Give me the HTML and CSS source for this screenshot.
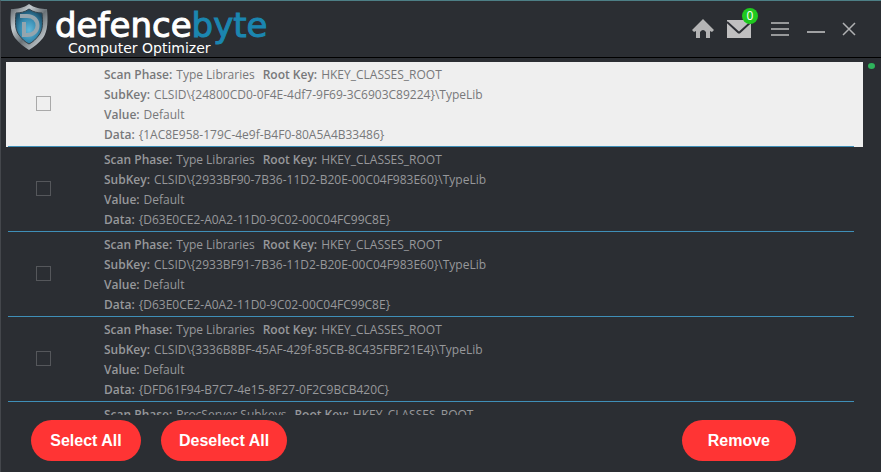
FILE: index.html
```html
<!DOCTYPE html>
<html lang="en">
<head>
<meta charset="UTF-8">
<meta name="viewport" content="width=device-width, initial-scale=1.0">
<title>defencebyte Computer Optimizer</title>
<link rel="stylesheet" href="styles.css">
</head>

<body>

<header class="titlebar">
  <div class="brand">
    <svg class="shield" viewBox="0 0 38 46" aria-hidden="true">
      <defs>
        <linearGradient id="steel" x1="0" y1="0" x2="1" y2="1">
          <stop offset="0" stop-color="#4d5459"/>
          <stop offset=".3" stop-color="#c3cace"/>
          <stop offset=".55" stop-color="#697176"/>
          <stop offset=".8" stop-color="#b5bcc0"/>
          <stop offset="1" stop-color="#3c4348"/>
        </linearGradient>
        <radialGradient id="glass" cx=".5" cy=".6" r=".6">
          <stop offset="0" stop-color="#5fb9dc"/>
          <stop offset=".6" stop-color="#3385aa"/>
          <stop offset="1" stop-color="#1c4c66"/>
        </radialGradient>
      </defs>
      <path d="M19 0C14 4 7 5 1 5C0 16 0 27 5 34C9 39 14 43 19 46C24 43 29 39 33 34C38 27 38 16 37 5C31 5 24 4 19 0Z" fill="url(#steel)"/>
      <path d="M19 5C15 8 10 9 6 9C5 18 5 26 9 31C12 35 15 38 19 40C23 38 26 35 29 31C33 26 33 18 32 9C28 9 23 8 19 5Z" fill="url(#glass)" stroke="#34434c"/>
      <path d="M10 12H17C31 12 31 31 17 31H14V18" fill="none" stroke="#94a5ae" stroke-width="4"/>
    </svg>
    <div class="wordmark">
      <div class="name">defence<span>byte</span></div>
      <div class="product">Computer Optimizer</div>
    </div>
  </div>

  <nav class="tools">
    <button class="tool home" aria-label="Home">
      <svg width="22" height="20" viewBox="0 0 22 20"><path d="M11 0L22 11L20 13L18 12V19H14V13Q11 9 8 13V19H4V12L2 13L0 11Z" fill="#b4b4b5"/></svg>
    </button>
    <button class="tool mail" aria-label="Messages">
      <svg width="24" height="18" viewBox="0 0 24 18"><rect width="24" height="18" fill="#c0bfc0"/><path d="M0 2L11 12Q12 13 13 12L24 2" fill="none" stroke="#2c2e34" stroke-width="2"/></svg>
      <span class="badge">0</span>
    </button>
    <button class="tool menu" aria-label="Menu">
      <svg width="20" height="16" viewBox="0 0 20 16"><path d="M1 2H19M1 8H19M1 14H19" stroke="#97989a" stroke-width="2"/></svg>
    </button>
    <button class="tool minimize" aria-label="Minimize">
      <svg width="18" height="16" viewBox="0 0 18 16"><path d="M0 11H18" stroke="#a0a1a3" stroke-width="2"/></svg>
    </button>
    <button class="tool close" aria-label="Close">
      <svg width="14" height="14" viewBox="0 0 14 14"><path d="M1 1L13 13M13 1L1 13" stroke="#b0b1b3" stroke-width="1.5"/></svg>
    </button>
  </nav>
</header>

<main class="results">
  <ul class="entries">
    <li class="entry selected">
      <label class="entryRow">
        <input type="checkbox">
        <span class="details">
          <span class="line"><b>Scan Phase:</b>Type Libraries<b class="next">Root Key:</b>HKEY_CLASSES_ROOT</span>
          <span class="line"><b>SubKey:</b>CLSID\{24800CD0-0F4E-4df7-9F69-3C6903C89224}\TypeLib</span>
          <span class="line"><b>Value:</b>Default</span>
          <span class="line"><b>Data:</b>{1AC8E958-179C-4e9f-B4F0-80A5A4B33486}</span>
        </span>
      </label>
    </li>
    <li class="entry">
      <label class="entryRow">
        <input type="checkbox">
        <span class="details">
          <span class="line"><b>Scan Phase:</b>Type Libraries<b class="next">Root Key:</b>HKEY_CLASSES_ROOT</span>
          <span class="line"><b>SubKey:</b>CLSID\{2933BF90-7B36-11D2-B20E-00C04F983E60}\TypeLib</span>
          <span class="line"><b>Value:</b>Default</span>
          <span class="line"><b>Data:</b>{D63E0CE2-A0A2-11D0-9C02-00C04FC99C8E}</span>
        </span>
      </label>
    </li>
    <li class="entry">
      <label class="entryRow">
        <input type="checkbox">
        <span class="details">
          <span class="line"><b>Scan Phase:</b>Type Libraries<b class="next">Root Key:</b>HKEY_CLASSES_ROOT</span>
          <span class="line"><b>SubKey:</b>CLSID\{2933BF91-7B36-11D2-B20E-00C04F983E60}\TypeLib</span>
          <span class="line"><b>Value:</b>Default</span>
          <span class="line"><b>Data:</b>{D63E0CE2-A0A2-11D0-9C02-00C04FC99C8E}</span>
        </span>
      </label>
    </li>
    <li class="entry">
      <label class="entryRow">
        <input type="checkbox">
        <span class="details">
          <span class="line"><b>Scan Phase:</b>Type Libraries<b class="next">Root Key:</b>HKEY_CLASSES_ROOT</span>
          <span class="line"><b>SubKey:</b>CLSID\{3336B8BF-45AF-429f-85CB-8C435FBF21E4}\TypeLib</span>
          <span class="line"><b>Value:</b>Default</span>
          <span class="line"><b>Data:</b>{DFD61F94-B7C7-4e15-8F27-0F2C9BCB420C}</span>
        </span>
      </label>
    </li>
    <li class="entry">
      <label class="entryRow">
        <span class="details">
          <span class="line"><b>Scan Phase:</b>ProcServer Subkeys<b class="next">Root Key:</b>HKEY_CLASSES_ROOT</span>
        </span>
      </label>
    </li>
  </ul>
  <span class="scrollDot"></span>
</main>

<footer class="actions">
  <button class="actionBtn">Select All</button>
  <button class="actionBtn">Deselect All</button>
  <button class="actionBtn remove">Remove</button>
</footer>

</body>
</html>
```
FILE: styles.css
```css
* {
  box-sizing: border-box;
}
html, body {
  height: 100%;
  margin: 0;
}
body {
  display: flex;
  flex-direction: column;
  background-color: #2b2e33;
  border-top: 1px solid #4d7f86;
  border-left: 1px solid #44474c;
  color: #97989b;
  font-family: "Open Sans", "Noto Sans", sans-serif;
  font-size: 12px;
  line-height: 20px;
  overflow: hidden;
}
button {
  margin: 0;
  padding: 0;
  border: none;
  background: transparent;
  cursor: pointer;
}
svg {
  display: block;
}

/* title bar */
.titlebar {
  display: flex;
  flex: none;
  justify-content: space-between;
  height: 57px;
  padding: 0 25px 0 9px;
  border-bottom: 1px solid #000;
}
.brand {
  display: flex;
  gap: 7px;
}
.shield {
  width: 38px;
  height: 46px;
  margin-top: 3px;
}
.wordmark {
  font-family: "DejaVu Sans", sans-serif;
  color: #fff;
}
.name {
  padding-top: 4px;
  font-size: 34px;
  line-height: 40px;
  height: 38px;
  -webkit-text-stroke: 1px;
}
.name span {
  color: #1b86b0;
}
.product {
  padding-left: 13px;
  font-size: 14px;
  line-height: 18px;
}
.tools {
  display: flex;
  align-items: center;
}
.tool {
  position: relative;
}
.mail {
  margin-left: 13px;
}
.menu {
  margin-left: 19px;
}
.minimize {
  margin-left: 17px;
}
.close {
  margin-left: 17px;
}
.badge {
  position: absolute;
  top: -12px;
  right: -7px;
  width: 16px;
  height: 16px;
  border-radius: 50%;
  background-color: #1fc91f;
  color: #fff;
  font-family: "Open Sans", sans-serif;
  font-size: 12px;
  line-height: 16px;
  text-align: center;
}

/* scan results */
.results {
  display: flex;
  flex: 1;
  min-height: 0;
  padding: 4px 6px 0 5px;
  overflow: hidden;
}
.entries {
  flex: 1;
  margin: 0;
  padding: 0;
  list-style: none;
}
.entry {
  padding: 0 9px 0 2px;
}
.entry.selected {
  background-color: #efefef;
  color: #77787a;
}
.entryRow {
  display: flex;
  align-items: center;
  min-height: 85px;
  padding: 3px 0 1px 28px;
  border-bottom: 1px solid #3f8fb8;
}
.entryRow input {
  appearance: none;
  width: 15px;
  height: 15px;
  margin: 0 0 4px;
  border: 1px solid #55575b;
}
.selected input {
  border-color: #a9a9a9;
}
.entryRow input:checked {
  background-color: #3a8cb5;
}
.details {
  margin-left: 53px;
}
.entryRow > .details:first-child {
  align-self: flex-start;
  margin-left: 68px;
}
.line {
  display: block;
  white-space: nowrap;
}
.line b {
  margin-right: 4px;
  font-weight: 600;
}
.line .next {
  margin-left: 8px;
}
.scrollDot {
  width: 7px;
  height: 6px;
  margin: 1px 0 0 5px;
  border-radius: 50%;
  background-color: #2fb35c;
}

/* bottom buttons */
.actions {
  display: flex;
  flex: none;
  gap: 20px;
  height: 57px;
  padding: 5px 85px 11px 30px;
}
.actionBtn {
  min-width: 110px;
  padding: 0 18px;
  border-radius: 21px;
  background-color: #ff3434;
  color: #fff;
  font-family: "Liberation Sans", Arial, sans-serif;
  font-size: 16px;
  font-weight: bold;
}
.actionBtn:hover {
  background-color: #ff4b4b;
}
.remove {
  margin-left: auto;
  padding: 0 26px;
}
```
